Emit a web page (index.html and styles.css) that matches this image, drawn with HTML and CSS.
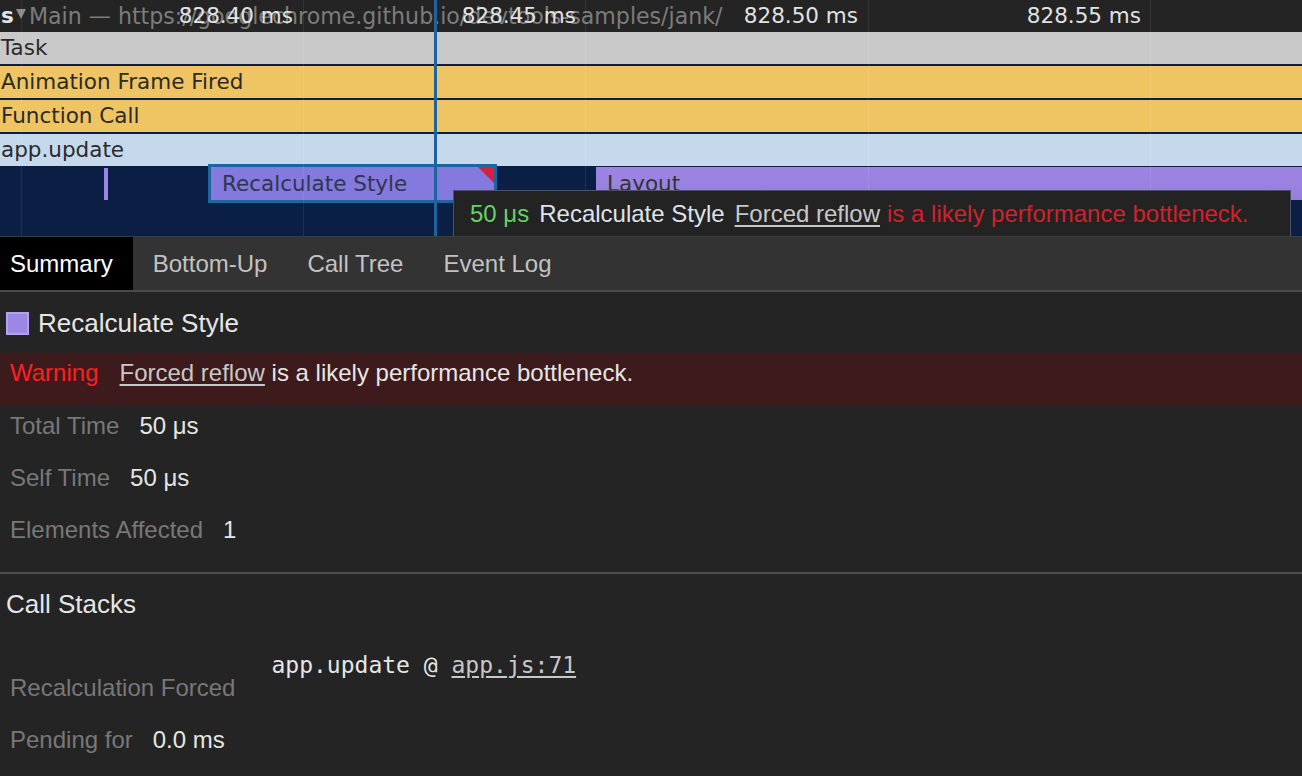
FILE: index.html
```html
<!DOCTYPE html>
<html>
<head>
<meta charset="utf-8">
<link rel="stylesheet" href="styles.css">
</head>
<body>
<div class="flame">
  <div class="ruler"><span class="clip-s">s</span><svg class="tri" width="10" height="10" viewBox="0 0 10 10"><path d="M0 0H10L5 10Z"/></svg><span class="track">Main — https://googlechrome.github.io/devtools-samples/jank/</span></div>
  <div class="row task">Task</div>
  <div class="row frame">Animation Frame Fired</div>
  <div class="row frame">Function Call</div>
  <div class="row fn">app.update</div>
  <div class="lane"></div>

  <div class="ev mini"></div>
  <div class="ev recalc"><span class="ev-label">Recalculate Style</span><i class="warn-corner"></i></div>
  <div class="ev layout"><span class="ev-label">Layout</span></div>

  <div class="gridline g1"></div>
  <div class="gridline g2"></div>
  <div class="gridline g3"></div>
  <div class="gridline g4"></div>
  <div class="gridline g5"></div>

  <span class="time t1">828.40 ms</span>
  <span class="time t2">828.45 ms</span>
  <span class="time t3">828.50 ms</span>
  <span class="time t4">828.55 ms</span>

  <div class="cursor"></div>

  <div class="tooltip"><span class="tt-dur">50 μs</span><span class="tt-name">Recalculate Style</span><span class="tt-link">Forced reflow</span><span class="tt-warn">is a likely performance bottleneck.</span></div>
</div>

<div class="tabs">
  <div class="tab active">Summary</div>
  <div class="tab">Bottom-Up</div>
  <div class="tab">Call Tree</div>
  <div class="tab">Event Log</div>
</div>

<div class="details">
  <div class="heading"><span class="swatch"></span>Recalculate Style</div>
  <div class="warning"><span class="warn-label">Warning</span><span class="link">Forced reflow</span> is a likely performance bottleneck.</div>
  <div class="field"><span class="label">Total Time</span><span class="value">50 μs</span></div>
  <div class="field"><span class="label">Self Time</span><span class="value">50 μs</span></div>
  <div class="field"><span class="label">Elements Affected</span><span class="value">1</span></div>
  <div class="sep"></div>
  <div class="heading sub">Call Stacks</div>
  <div class="field stack"><span class="label">Recalculation Forced</span><span class="value mono">app.update @ <span class="link">app.js:71</span></span></div>
  <div class="field"><span class="label">Pending for</span><span class="value">0.0 ms</span></div>
</div>
</body>
</html>
```

FILE: styles.css
```css
html, body {
  margin: 0;
  padding: 0;
}
body {
  width: 1302px;
  height: 776px;
  overflow: hidden;
  background: #242424;
  font-family: "Liberation Sans", Arial, sans-serif;
}

/* ---------- flame chart ---------- */
.flame {
  position: relative;
  height: 236px;
  overflow: hidden;
  background: #0a1f43;
  font-family: "DejaVu Sans", sans-serif;
  font-size: 21.5px;
}
.ruler {
  height: 32px;
  line-height: 32px;
  background: #242424;
  display: flex;
  align-items: center;
  white-space: nowrap;
  color: #7c7c7c;
}
.clip-s {
  color: #e4e4e4;
  font-weight: bold;
  padding-left: 1px;
  width: 14px;
}
.tri {
  fill: #8a8a8a;
  margin-left: 1px;
  margin-right: 3px;
  margin-top: -5px;
}
.track {
  color: #7c7c7c;
  font-size: 22.1px;
}
.row {
  height: 32px;
  line-height: 32px;
  margin-bottom: 2px;
  padding-left: 1px;
  color: #2a2a2a;
  white-space: nowrap;
}
.task { background: #c9c9c9; }
.frame { background: #efc462; }
.fn { background: #c6d9ec; margin-bottom: 0; }
.lane { height: 70px; }

.ev {
  position: absolute;
  box-sizing: border-box;
  white-space: nowrap;
  color: #2f3552;
}
.mini {
  left: 104px;
  top: 168px;
  width: 4px;
  height: 32px;
  background: #9b84e3;
}
.recalc {
  left: 208px;
  top: 164px;
  width: 289px;
  height: 39px;
  border: 3px solid #1d64a0;
  background: #8479dc;
}
.ev-label {
  display: block;
  line-height: 34px;
  padding-left: 11px;
}
.warn-corner {
  position: absolute;
  right: 0;
  top: 0;
  width: 0;
  height: 0;
  border-top: 16px solid #d8203c;
  border-left: 16px solid transparent;
}
.layout {
  left: 596px;
  top: 167px;
  width: 720px;
  height: 33px;
  background: linear-gradient(#9d84e3, #9780dc);
  color: #333;
}
.gridline {
  position: absolute;
  top: 0;
  bottom: 0;
  width: 1px;
  background: rgba(255, 255, 255, 0.08);
}
.g1 { left: 21px; }
.g2 { left: 303px; }
.g3 { left: 585px; }
.g4 { left: 868px; }
.g5 { left: 1150px; }

.time {
  position: absolute;
  top: 0;
  width: 130px;
  line-height: 32px;
  text-align: right;
  color: #e2e2e2;
  white-space: nowrap;
}
.t1 { left: 163px; }
.t2 { left: 446px; }
.t3 { left: 728px; }
.t4 { left: 1011px; }

.cursor {
  position: absolute;
  left: 434px;
  top: 0;
  bottom: 0;
  width: 3px;
  background: #1e63a0;
}

.tooltip {
  position: absolute;
  left: 453px;
  top: 190px;
  width: 838px;
  height: 70px;
  box-sizing: border-box;
  padding: 9px 0 0 16px;
  background: #232323;
  border: 1px solid #4b5263;
  font-family: "Liberation Sans", Arial, sans-serif;
  font-size: 24px;
  line-height: 28px;
  white-space: nowrap;
  display: flex;
  gap: 10px;
}
.tt-dur { color: #66d266; }
.tt-name { color: #dfe2e8; }
.tt-link {
  color: #c8c8c8;
  text-decoration: underline;
  text-underline-offset: 3px;
}
.tt-warn { color: #d0222c; margin-left: -3px; }

/* ---------- tabs ---------- */
.tabs {
  display: flex;
  height: 53px;
  background: #333333;
  border-top: 1px solid #3c3c3c;
  border-bottom: 2px solid #4a4a4a;
  font-size: 24px;
}
.tab {
  padding: 0 20px 0 20px;
  line-height: 53px;
  color: #c2c2c2;
  white-space: nowrap;
}
.tab.active {
  background: #000;
  color: #fff;
  padding-left: 10px;
  padding-right: 20px;
}

/* ---------- details ---------- */
.details {
  font-size: 24px;
  color: #e4e4e4;
}
.heading {
  display: flex;
  align-items: center;
  padding: 16px 0 15px 6px;
  line-height: 30px;
  font-size: 26px;
  color: #e6e6e6;
}
.heading.sub {
  padding: 15px 0 16px 6px;
}
.swatch {
  width: 19px;
  height: 19px;
  background: #9c87e4;
  border: 2px solid #b1a3ef;
  margin-right: 9px;
}
.warning {
  background: #3d1a1b;
  padding: 6px 0 19px 10px;
  line-height: 28px;
  color: #e6e6e6;
  white-space: nowrap;
}
.warn-label {
  color: #ff1f1f;
  margin-right: 21px;
}
.link {
  color: #c8c8c8;
  text-decoration: underline;
  text-underline-offset: 3px;
}
.field {
  display: flex;
  padding: 6px 0 18px 10px;
  line-height: 28px;
  white-space: nowrap;
}
.label {
  color: #787878;
  margin-right: 20px;
}
.value {
  color: #e6e6e6;
}
.sep {
  margin-top: 10px;
  height: 2px;
  background: #4c4c4c;
}
.stack {
  align-items: flex-start;
  padding-top: 16px;
}
.stack .label {
  padding-top: 23px;
  margin-right: 36px;
}
.mono {
  font-family: "DejaVu Sans Mono", monospace;
  font-size: 23px;
}
.mono .link {
  color: #c8c8c8;
}
```
